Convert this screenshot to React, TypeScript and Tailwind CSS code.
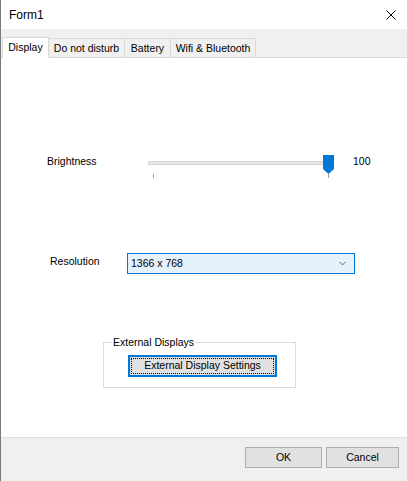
import { ChevronDown } from "lucide-react";

const TABS: { label: string; w: string }[] = [
  { label: "Display", w: "w-[47px]" },
  { label: "Do not disturb", w: "w-[76px]" },
  { label: "Battery", w: "w-[46px]" },
  { label: "Wifi & Bluetooth", w: "w-[85px]" },
];

function Slider() {
  return (
    <div className="relative h-[28px] w-[186px]">
      <div className="absolute left-0 top-[8px] h-[4px] w-[181px] border border-[#d6d6d6] bg-[#e7e7e7]" />
      <svg
        className="absolute left-[175px] top-[2px]"
        width="11"
        height="19"
        viewBox="0 0 11 19"
      >
        <path d="M0 0 H11 V14 L5.5 19 L0 14 Z" fill="#0078d7" />
      </svg>
      <div className="absolute left-[5px] top-[21px] h-[4px] w-px bg-[#a0a0a0]" />
      <div className="absolute left-[180px] top-[21px] h-[4px] w-px bg-[#a0a0a0]" />
    </div>
  );
}

export default function App() {
  return (
    <div
      className="flex h-[481px] w-[407px] flex-col border-l border-[#7a7a7a] bg-white text-[10.5px] text-black"
      style={{ fontFamily: '"Liberation Sans", Arial, sans-serif' }}
    >
      {/* title bar */}
      <div className="flex h-[29px] items-center justify-between bg-white pl-[8px] pr-[11px]">
        <span className="text-[12px]">Form1</span>
        <svg width="10" height="10" viewBox="0 0 10 10">
          <path d="M0.5 0.5 L9.5 9.5 M9.5 0.5 L0.5 9.5" stroke="#000" strokeWidth="1" />
        </svg>
      </div>

      <div className="flex flex-1 flex-col bg-[#f0f0f0]">
        {/* tab strip */}
        <div className="flex h-[28px] items-end pl-[1px]">
          {TABS.map((t, i) =>
            i === 0 ? (
              <div
                key={t.label}
                className={`relative -mb-px flex h-[21px] items-start justify-center border border-b-0 border-[#d9d9d9] bg-white pt-[2px] ${t.w}`}
              >
                {t.label}
              </div>
            ) : (
              <div
                key={t.label}
                className={`flex h-[19px] items-center justify-center border border-b-0 border-l-0 border-[#d9d9d9] bg-[#f0f0f0] pt-[2px] ${t.w}`}
              >
                {t.label}
              </div>
            )
          )}
        </div>

        {/* tab page */}
        <div className="flex h-[380px] flex-col border-t border-[#d9d9d9] bg-white">
          <div className="mt-[95px] flex h-[28px] items-start">
            <span className="ml-[46px] mt-[1px] w-[101px]">Brightness</span>
            <Slider />
            <span className="ml-[19px] mt-[1px]">100</span>
          </div>

          <div className="mt-[72px] flex items-center">
            <span className="ml-[49px] w-[77px] -translate-y-[2px]">Resolution</span>
            <div className="flex h-[21px] w-[228px] items-center justify-between border border-[#0078d7] bg-[#e5f1fb] pl-[3px] pr-[6px]">
              <span>1366 x 768</span>
              <ChevronDown className="h-[11px] w-[11px] text-[#404040]" strokeWidth={1.75} />
            </div>
          </div>

          <div className="relative ml-[102px] mt-[68px] flex h-[46px] w-[193px] border border-[#dcdcdc] pl-[24px] pt-[12px]">
            <span className="absolute -top-[8px] left-[8px] bg-white px-[1px]">External Displays</span>
            <div className="flex h-[22px] w-[149px] items-center justify-center border-2 border-[#0078d7] bg-[#e1e1e1] p-[1px]">
              <div className="flex h-full w-full items-center justify-center border border-dotted border-black">
                External Display Settings
              </div>
            </div>
          </div>
        </div>

        {/* footer */}
        <div className="flex flex-1 items-start justify-end gap-[4px] border-t border-[#dfdfdf] pr-[8px] pt-[9px]">
          <button className="h-[21px] w-[77px] border border-[#adadad] bg-[#e1e1e1]">OK</button>
          <button className="h-[21px] w-[73px] border border-[#adadad] bg-[#e1e1e1]">Cancel</button>
        </div>
      </div>
    </div>
  );
}
